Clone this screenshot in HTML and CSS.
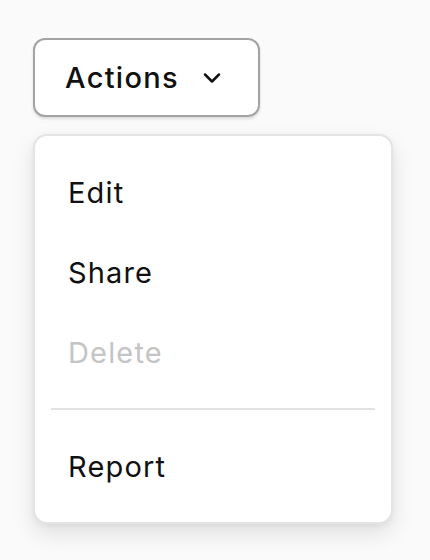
FILE: index.html
```html
<!DOCTYPE html>
<html lang="en">
<head>
<meta charset="utf-8">
<title>Actions menu</title>
<link rel="stylesheet" href="styles.css">
</head>
<body>
  <div class="dropdown">
    <button class="trigger" type="button">
      <span class="trigger-label">Actions</span>
      <svg class="chevron" width="24" height="24" viewBox="0 0 24 24" aria-hidden="true">
        <path d="M5 8.5l7 7 7-7" fill="none" stroke="currentColor" stroke-width="2.5" stroke-linecap="round" stroke-linejoin="round"/>
      </svg>
    </button>
    <div class="menu" role="menu">
      <div class="item" role="menuitem">Edit</div>
      <div class="item" role="menuitem">Share</div>
      <div class="item disabled" role="menuitem" aria-disabled="true">Delete</div>
      <div class="separator" role="separator"></div>
      <div class="item" role="menuitem">Report</div>
    </div>
  </div>
</body>
</html>
```
FILE: styles.css
```css
* { box-sizing: border-box; }

html {
  background: #fafafa;
  min-height: 100%;
}

body {
  margin: 0;
  min-height: 100vh;
  background: #fafafa;
  padding: 38px 0 0 33px;
  font-family: Inter, "Noto Sans", sans-serif;
  color: #111;
}

.dropdown {
  display: flex;
  flex-direction: column;
  align-items: flex-start;
  gap: 17px;
}

.trigger {
  display: flex;
  align-items: center;
  justify-content: space-between;
  height: 79px;
  width: 227px;
  padding: 0 34px 0 30px;
  background: #fff;
  border: 2px solid #a3a3a3;
  border-radius: 12px;
  box-shadow: 0 2px 3px rgba(0, 0, 0, 0.12);
  font-family: inherit;
  font-size: 29px;
  font-weight: 500;
  letter-spacing: 0.045em;
  color: #111;
  cursor: pointer;
}

.trigger-label {
  line-height: 1;
}

.chevron {
  color: #111;
  flex: none;
}

.menu {
  width: 360px;
  padding: 16px;
  background: #fff;
  border: 2px solid #e4e4e4;
  border-radius: 14px;
  box-shadow: 0 10px 22px rgba(0, 0, 0, 0.10), 0 2px 6px rgba(0, 0, 0, 0.05);
}

.item {
  display: flex;
  align-items: center;
  height: 80px;
  padding: 0 17px;
  font-size: 29px;
  font-weight: 400;
  letter-spacing: 0.04em;
  color: #111;
  border-radius: 8px;
}

.item.disabled {
  color: #c4c4c4;
}

.separator {
  height: 2px;
  margin: 16px 0;
  background: #e2e2e2;
}
```
